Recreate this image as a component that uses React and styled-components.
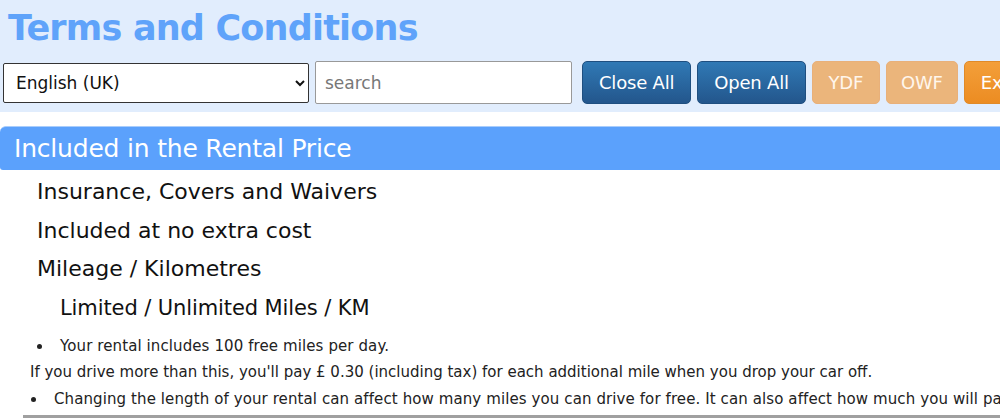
import React from 'react';
import styled, { createGlobalStyle } from 'styled-components';

const GlobalStyle = createGlobalStyle`
  html, body {
    margin: 0;
    padding: 0;
    background: #ffffff;
    overflow: hidden;
  }
  body {
    font-family: "DejaVu Sans", Verdana, sans-serif;
    color: #111;
  }
`;

const Page = styled.div`
  width: 1000px;
  height: 418px;
  overflow: hidden;
`;

const Header = styled.header`
  background: #e1edfd;
  padding: 5px 0 0 0;
  height: 112px;
  box-sizing: border-box;
`;

const Title = styled.h1`
  margin: 0 0 0 8px;
  font-size: 35px;
  line-height: 46px;
  font-weight: bold;
  color: #5fa3fa;
  letter-spacing: -0.8px;
  white-space: nowrap;
`;

const Toolbar = styled.div`
  display: flex;
  align-items: center;
  gap: 6px;
  margin-top: 10px;
  padding-left: 3px;
  white-space: nowrap;
`;

const LangSelect = styled.select`
  flex: none;
  width: 306px;
  height: 40px;
  box-sizing: border-box;
  border: 1px solid #333;
  border-radius: 2px;
  background: #fff;
  font-family: "DejaVu Sans", Verdana, sans-serif;
  font-size: 17px;
  padding: 0 8px;
  color: #111;
`;

const Search = styled.input`
  flex: none;
  width: 257px;
  height: 43px;
  box-sizing: border-box;
  border: 1px solid #999;
  border-radius: 2px;
  font-family: "DejaVu Sans", Verdana, sans-serif;
  font-size: 17px;
  padding: 0 9px;
  margin-right: 4px;
  &::placeholder { color: #777; }
`;

const tones = {
  dark: 'linear-gradient(#3079b5, #23568c)',
  pale: '#ebb57b',
  orange: 'linear-gradient(#f39f3a, #ec8c22)',
};

const Button = styled.button`
  flex: none;
  height: 43px;
  width: ${p => (p.w ? `${p.w}px` : 'auto')};
  box-sizing: border-box;
  padding: 0 ${p => (p.w ? 0 : 16)}px;
  border: 1px solid ${p => (p.tone === 'dark' ? '#1f4f80' : p.tone === 'pale' ? '#e8b07a' : '#e08a28')};
  border-radius: 5px;
  background: ${p => tones[p.tone]};
  color: ${p => (p.tone === 'pale' ? '#fff6ec' : '#fff')};
  font-family: "DejaVu Sans", Verdana, sans-serif;
  font-size: 18px;
  letter-spacing: -0.2px;
`;

const Section = styled.section`
  margin-top: 14px;
`;

const SectionBar = styled.div`
  height: 43px;
  background: #5ba1fc;
  border-top: 1px solid #a9cdfc;
  border-top-left-radius: 6px;
  border-bottom-left-radius: 3px;
  color: #fff;
  font-size: 25px;
  line-height: 43px;
  padding-left: 14px;
  letter-spacing: -0.2px;
  white-space: nowrap;
`;

const Body = styled.div`
  padding-top: 2px;
`;

const SubHead = styled.div`
  font-size: ${p => p.size || 22}px;
  line-height: ${p => p.lh || 39}px;
  padding-left: ${p => p.indent || 37}px;
  color: #111;
  letter-spacing: ${p => p.ls || 0}px;
  white-space: nowrap;
`;

const List = styled.ul`
  margin: ${p => p.top || 0}px 0 0 0;
  padding-left: ${p => p.indent}px;
  font-size: 15px;
  line-height: 26px;
  letter-spacing: 0.1px;
  color: #222;
  white-space: nowrap;
  list-style: disc;
  & li { padding-left: 7px; }
`;

const Note = styled.p`
  margin: 0;
  padding-left: 30px;
  font-size: 15px;
  line-height: 27px;
  color: #222;
  white-space: nowrap;
`;

const Rule = styled.hr`
  margin: 3px 0 0 23px;
  border: none;
  border-top: 3px solid #a0a0a0;
`;

export default function App() {
  return (
    <Page>
      <GlobalStyle />
      <Header>
        <Title>Terms and Conditions</Title>
        <Toolbar>
          <LangSelect defaultValue="en-GB">
            <option value="en-GB">English (UK)</option>
          </LangSelect>
          <Search placeholder="search" />
          <Button tone="dark">Close All</Button>
          <Button tone="dark">Open All</Button>
          <Button tone="pale" w={68}>YDF</Button>
          <Button tone="pale" w={72}>OWF</Button>
          <Button tone="orange">Export</Button>
        </Toolbar>
      </Header>
      <Section>
        <SectionBar>Included in the Rental Price</SectionBar>
        <Body>
          <SubHead lh={40}>Insurance, Covers and Waivers</SubHead>
          <SubHead lh={38}>Included at no extra cost</SubHead>
          <SubHead lh={38}>Mileage / Kilometres</SubHead>
          <SubHead indent={60} size={21} lh={40} ls={-0.1}>Limited / Unlimited Miles / KM</SubHead>
          <List indent={53} top={5}>
            <li>Your rental includes 100 free miles per day.</li>
          </List>
          <Note>If you drive more than this, you'll pay £ 0.30 (including tax) for each additional mile when you drop your car off.</Note>
          <List indent={47}>
            <li>Changing the length of your rental can affect how many miles you can drive for free. It can also affect how much you will pay for each additional mile.</li>
          </List>
          <Rule />
        </Body>
      </Section>
    </Page>
  );
}
